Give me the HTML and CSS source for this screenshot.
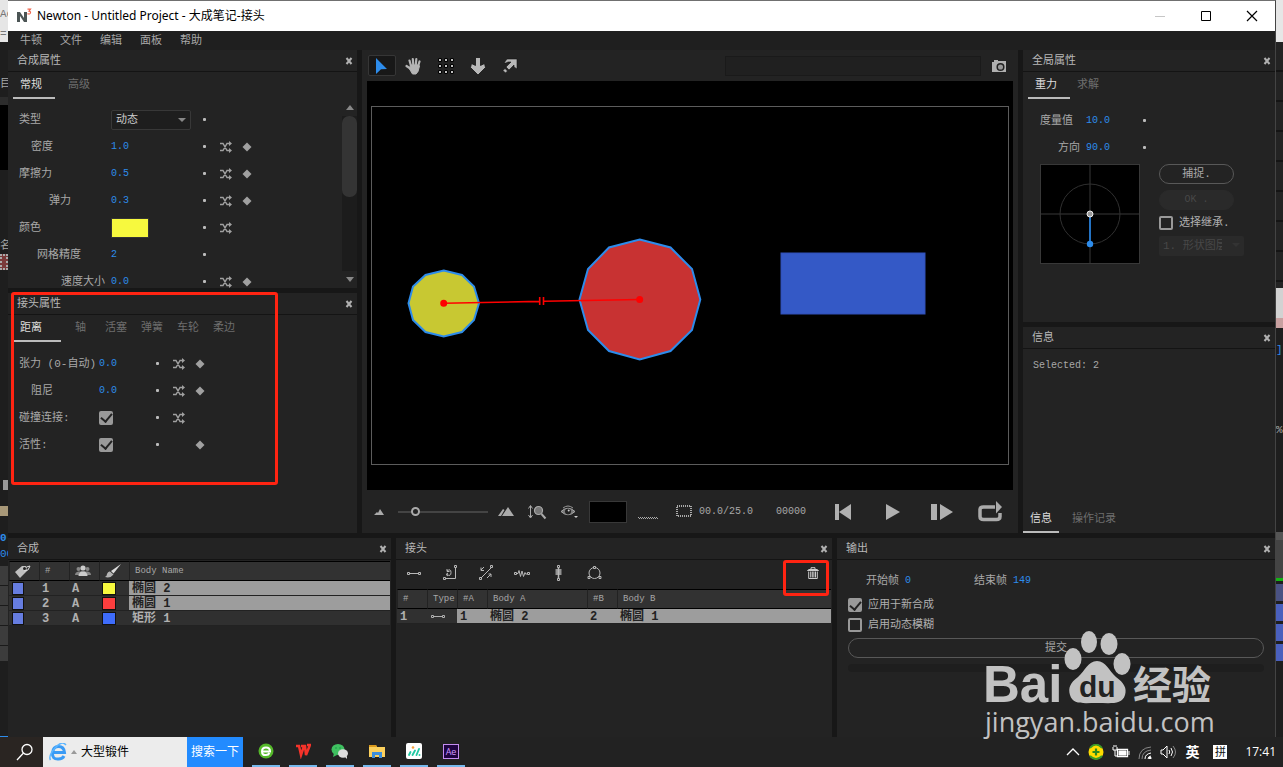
FILE: index.html
```
<!doctype html>
<html lang="zh-CN">
<head>
    <meta charset="utf-8">
    <meta name="viewport" content="width=device-width, initial-scale=1.0">
    <title>Newton - Untitled Project</title>
    <link rel="stylesheet" href="styles.css">
</head>
<body>

<!-- 公用图标 -->
<svg class="sprite" aria-hidden="true">
    <symbol id="i-shuffle" viewBox="0 0 12 12">
        <path d="M0 2.500h3L7 9.500h3M0 9.500h3L7 2.500h3" fill="none" stroke="currentColor" stroke-width="1.400"/>
        <path d="M9 0l3 2.500L9 5zM9 7l3 2.500L9 12z" fill="currentColor"/>
    </symbol>
    <symbol id="i-key" viewBox="0 0 10 10"><path d="M5 .5L9.500 5 5 9.500.5 5z" fill="currentColor"/></symbol>
    <symbol id="i-close" viewBox="0 0 8 8"><path d="M1.500 1l5 6M6.500 1l-5 6" stroke="currentColor" stroke-width="2"/></symbol>
    <symbol id="i-link" viewBox="0 0 16 16">
        <path d="M4 8.500h8" stroke="currentColor"/>
        <path d="M1.500 7.500h2v2h-2zM12.500 7.500h2v2h-2z" fill="#232323" stroke="currentColor"/>
    </symbol>
</svg>

<div class="screen">
    <div class="desktop">
        <div class="behind left">
            <div class="seg light"><span>Ac</span><span>=(</span></div>
            <div class="seg tabs-peek"><span>目</span></div>
            <div class="seg black"></div>
            <div class="seg names"><span>名</span><i class="film"></i></div>
            <div class="seg rest"><i class="trash-peek"></i></div>
            <div class="seg sand"></div>
            <div class="seg time-peek"><b>0:</b><span>00</span></div>
            <div class="seg rows-peek"></div>
            <div class="seg foot"></div>
        </div>

        <div class="window">
            <header class="titlebar">
                <svg class="logo" width="17" height="16" viewBox="0 0 17 16">
                    <path d="M1 14V4h3l4 6V4h3v10H8L4 8v6z" fill="#4c5555"/>
                    <path d="M11.500 1.200h3L13 3.200q2.500.5 1 2.400-1 .8-2.500 0" fill="none" stroke="#f0664e" stroke-width="1.200"/>
                </svg>
                <h1>Newton - Untitled Project - 大成笔记-接头</h1>
                <div class="win-buttons">
                    <button aria-label="最小化"><svg width="12" height="12"><path d="M1 6.500h10" stroke="#c6c6c6"/></svg></button>
                    <button aria-label="最大化"><svg width="12" height="12"><path d="M1.500 1.500h9v9h-9z" fill="none" stroke="#000"/></svg></button>
                    <button aria-label="关闭"><svg width="12" height="12"><path d="M1 1l10 10M11 1L1 11" stroke="#000" stroke-width="1.200"/></svg></button>
                </div>
            </header>

            <nav class="menubar">
                <button>牛顿</button>
                <button>文件</button>
                <button>编辑</button>
                <button>面板</button>
                <button>帮助</button>
            </nav>

            <main class="workspace">
                <div class="top">
                    <div class="column">
                        <section class="panel">
                            <div class="panel-head"><h2>合成属性</h2><button aria-label="关闭"><svg><use href="#i-close"/></svg></button></div>
                            <div class="tabs body-tabs"><button class="on">常规</button><button>高级</button></div>
                            <div class="scroller">
                                <div class="props">
                                    <div class="prop"><label for="type">类型</label>
                                        <span class="select"><select id="type"><option>动态</option></select></span><i class="dot"></i></div>
                                    <div class="prop"><label class="in2" for="density">密度</label><input class="num" id="density" value="1.0"><i class="dot"></i>
                                        <button aria-label="随机"><svg class="shuffle"><use href="#i-shuffle"/></svg></button><button aria-label="关键帧"><svg class="key"><use href="#i-key"/></svg></button></div>
                                    <div class="prop"><label for="friction">摩擦力</label><input class="num" id="friction" value="0.5"><i class="dot"></i>
                                        <button aria-label="随机"><svg class="shuffle"><use href="#i-shuffle"/></svg></button><button aria-label="关键帧"><svg class="key"><use href="#i-key"/></svg></button></div>
                                    <div class="prop"><label class="in5" for="bounce">弹力</label><input class="num" id="bounce" value="0.3"><i class="dot"></i>
                                        <button aria-label="随机"><svg class="shuffle"><use href="#i-shuffle"/></svg></button><button aria-label="关键帧"><svg class="key"><use href="#i-key"/></svg></button></div>
                                    <div class="prop"><span>颜色</span><button class="color" aria-label="颜色"></button><i class="dot"></i>
                                        <button aria-label="随机"><svg class="shuffle"><use href="#i-shuffle"/></svg></button></div>
                                    <div class="prop"><label class="in3" for="mesh">网格精度</label><input class="num" id="mesh" value="2"><i class="dot"></i></div>
                                    <div class="prop"><label class="in7" for="speed">速度大小</label><input class="num" id="speed" value="0.0"><i class="dot"></i>
                                        <button aria-label="随机"><svg class="shuffle"><use href="#i-shuffle"/></svg></button><button aria-label="关键帧"><svg class="key"><use href="#i-key"/></svg></button></div>
                                </div>
                                <div class="scrollbar"><i class="up"></i><div class="track"><div class="thumb"></div></div><i class="down"></i></div>
                            </div>
                        </section>

                        <section class="panel joint-panel">
                            <div class="panel-head"><h2>接头属性</h2><button aria-label="关闭"><svg><use href="#i-close"/></svg></button></div>
                            <div class="tabs joint-tabs"><button class="on">距离</button><button>轴</button><button>活塞</button><button>弹簧</button><button>车轮</button><button>柔边</button></div>
                            <div class="props joint-props">
                                <div class="prop"><label for="tension">张力 (0-自动)</label><input class="num" id="tension" value="0.0"><i class="dot"></i>
                                    <button aria-label="随机"><svg class="shuffle"><use href="#i-shuffle"/></svg></button><button aria-label="关键帧"><svg class="key"><use href="#i-key"/></svg></button></div>
                                <div class="prop"><label class="in2" for="damping">阻尼</label><input class="num" id="damping" value="0.0"><i class="dot"></i>
                                    <button aria-label="随机"><svg class="shuffle"><use href="#i-shuffle"/></svg></button><button aria-label="关键帧"><svg class="key"><use href="#i-key"/></svg></button></div>
                                <div class="prop"><label for="collide">碰撞连接:</label><input type="checkbox" id="collide" checked><i class="dot"></i>
                                    <button aria-label="随机"><svg class="shuffle"><use href="#i-shuffle"/></svg></button></div>
                                <div class="prop"><label for="active">活性:</label><input type="checkbox" id="active" checked><i class="dot"></i>
                                    <i></i><button aria-label="关键帧"><svg class="key"><use href="#i-key"/></svg></button></div>
                            </div>
                            <div class="mark"></div>
                        </section>
                    </div>

                    <section class="preview">
                        <div class="toolbar">
                            <button class="on" aria-label="选择"><svg width="14" height="18" viewBox="0 0 14 18"><path d="M1 1l11 11-6 .3L1 17z" fill="#2d8ceb"/></svg></button>
                            <button aria-label="抓手"><svg width="18" height="18" viewBox="0 0 18 18" fill="none" stroke="#b4b4b4" stroke-linecap="round" stroke-width="2.200"><path d="M6 9L4.500 3.500M8.300 8L7.800 2M10.800 8l.5-6M13 9.500l1.500-5M6 12L1.500 9"/><path d="M6 8h7.500l1 1-1.500 5.500-2 2.500H7.500L4.500 12z" fill="#b4b4b4" stroke-width="1"/></svg></button>
                            <button aria-label="网格"><svg width="16" height="16" viewBox="0 0 16 16" fill="#c0c0c0" stroke="#000"><path d="M.5.5h3v3h-3zM6.500.5h3v3h-3zM12.500.5h3v3h-3zM.5 6.500h3v3h-3zM6.500 6.500h3v3h-3zM12.500 6.500h3v3h-3zM.5 12.500h3v3h-3zM6.500 12.500h3v3h-3zM12.500 12.500h3v3h-3z"/></svg></button>
                            <button aria-label="重力"><svg width="18" height="18" viewBox="0 0 18 18"><path d="M6.500.5h5v8l4-2 1 4-7.500 7.500L1.500 10.500l1-4 4 2z" fill="#b8b8b8" stroke="#111" stroke-width=".8"/></svg></button>
                            <button aria-label="速度"><svg width="16" height="16" viewBox="0 0 16 16" fill="#b8b8b8"><path d="M5 1h10v10l-3-2V7l-5 5-3-3 5-5H6L4 5H2z" stroke="#111" stroke-width=".6"/><path d="M3 10.500l2.500 2.500-2 2L1 12.500z" stroke="#111" stroke-width=".6"/></svg></button>
                            <input class="status" type="text" aria-label="状态" readonly>
                            <button class="camera" aria-label="快照"><svg width="16" height="14" viewBox="0 0 16 14"><path d="M1 3h2V1h4v1h8v11H1z" fill="#b0b0b0"/><circle cx="9.500" cy="8" r="3.300" fill="#999" stroke="#222" stroke-width="1.500"/></svg></button>
                        </div>

                        <div class="viewport">
                            <svg viewBox="0 0 646 409">
                                <rect x="4.500" y="25.500" width="637" height="358" fill="none" stroke="#5c5c5c"/>
                                <g stroke="#2d8ceb" stroke-width="2">
                                    <polygon fill="#c8c832" points="76.700,189.500 95,194 107,205.500 112,222.300 107,239 95,251 76.700,255.500 58.500,251 46,239 41.500,222.300 46,205.500 58.500,194"/>
                                    <polygon fill="#c83232" points="272.700,158.500 303.500,166.500 325,188 333.300,218.500 325,249 303.500,270 272.700,278.500 242,270 221,249 212.500,218.500 221,188 242,166.500"/>
                                </g>
                                <rect x="414" y="172" width="144" height="61" fill="#3459c6" stroke="#3050b8"/>
                                <g stroke="#f00" stroke-width="1.600" fill="#f00">
                                    <path d="M76.700 222.300L172 220.400M177 220.300L272.700 218.500M172.700 216v8M176.500 216v8"/>
                                    <circle cx="76.700" cy="222.300" r="2.700"/>
                                    <circle cx="272.700" cy="218.500" r="2.700"/>
                                </g>
                            </svg>
                        </div>

                        <div class="transport">
                            <svg width="10" height="6" viewBox="0 0 10 6"><path d="M0 6l3-3 1 1 2-4 4 6z" fill="#aaa"/></svg>
                            <input type="range" aria-label="缩放" min="0" max="100" value="16">
                            <svg width="16" height="10" viewBox="0 0 16 10"><path d="M0 9l5-7 1.500 1L3 9zM4 9l6-9 6 9z" fill="#aaa"/></svg>
                            <button aria-label="适合"><svg width="20" height="16" viewBox="0 0 20 16" fill="none" stroke="#aaa"><path d="M3.500 2v11M1.500 4.500l2-3 2 3M1.500 11l2 3 2-3"/><circle cx="11.500" cy="6.500" r="4" fill="#777" stroke-width="1.200"/><path d="M14.500 10l4 4.500" stroke-width="2"/></svg></button>
                            <button aria-label="显示"><svg width="18" height="14" viewBox="0 0 18 14"><path d="M1 6.500Q8 0 15 6.500Q8 13 1 6.500z" fill="#777" stroke="#aaa"/><path d="M3 3Q8-1 13 3" fill="none" stroke="#999"/><circle cx="8" cy="6.500" r="3" fill="#222"/><circle cx="8.700" cy="5.500" r="1" fill="#ccc"/><path d="M14 11h4l-2 2z" fill="#ccc"/></svg></button>
                            <button class="swatch" aria-label="背景颜色"></button>
                            <svg class="dash-line" width="20" height="16"><path d="M0 13.500h20M1 14.500h20" stroke="#aaa" stroke-dasharray="1 1"/></svg>
                            <svg width="16" height="14"><rect x="1" y="1" width="14" height="10" fill="none" stroke="#aaa" stroke-dasharray="1 1" stroke-width="2"/></svg>
                            <span class="clock">00.0/25.0</span>
                            <span class="clock">00000</span>
                            <button aria-label="回到开头"><svg width="16" height="16" viewBox="0 0 16 16" fill="#b0b0b0"><path d="M0 0h4v16H0zM16 0v16L4 8z"/></svg></button>
                            <button aria-label="播放"><svg width="14" height="16" viewBox="0 0 14 16" fill="#b0b0b0"><path d="M0 0l14 8-14 8z"/></svg></button>
                            <button aria-label="单步"><svg width="22" height="16" viewBox="0 0 22 16" fill="#b0b0b0"><path d="M0 0h6v16H0zM9 0l13 8-13 8z"/></svg></button>
                            <button class="loop" aria-label="循环"><svg width="24" height="22" viewBox="0 0 24 22"><path d="M17 6H5.500Q2 6 2 8.500v7Q2 18.500 5.500 18.500h13q3.500 0 3.500-3V12" fill="none" stroke="#aaa" stroke-width="3.500"/><path d="M18 0l6 6-6 6.500z" fill="#aaa"/></svg></button>
                        </div>
                    </section>

                    <div class="column side">
                        <section class="panel world">
                            <div class="panel-head"><h2>全局属性</h2><button aria-label="关闭"><svg><use href="#i-close"/></svg></button></div>
                            <div class="tabs world-tabs"><button class="on">重力</button><button>求解</button></div>
                            <div class="props world-props">
                                <div class="prop"><label for="magnitude">度量值</label><input class="num" id="magnitude" value="10.0"><i class="dot"></i></div>
                                <div class="prop"><label class="in3" for="direction">方向</label><input class="num" id="direction" value="90.0"><i class="dot"></i></div>
                            </div>
                            <div class="gravity">
                                <svg class="dial" viewBox="0 0 100 100">
                                    <rect x=".5" y=".5" width="99" height="99" stroke="#383838"/>
                                    <path d="M50 1v98M1 50h98" stroke="#1c1c1c" stroke-width="2"/>
                                    <circle cx="50" cy="50" r="30" fill="none" stroke="#303030"/>
                                    <path d="M50 50v30" stroke="#2473c4" stroke-width="2"/>
                                    <circle cx="50" cy="50" r="3" fill="#999" stroke="#eee"/>
                                    <circle cx="50" cy="80" r="3.200" fill="#2d8ceb"/>
                                </svg>
                                <div class="gravity-tools">
                                    <button class="pill">捕捉.</button>
                                    <button class="pill" disabled>OK .</button>
                                    <label class="check"><input type="checkbox">选择继承.</label>
                                    <span class="select off"><select aria-label="图层" disabled><option>1. 形状图层</option></select></span>
                                </div>
                            </div>
                        </section>

                        <section class="panel info">
                            <div class="panel-head"><h2>信息</h2><button aria-label="关闭"><svg><use href="#i-close"/></svg></button></div>
                            <p>Selected: 2</p>
                            <div class="tabs info-tabs"><button class="on">信息</button><button>操作记录</button></div>
                        </section>
                    </div>
                </div>

                <div class="bottom">
                    <section class="panel">
                        <div class="panel-head"><h2>合成</h2><button aria-label="关闭"><svg><use href="#i-close"/></svg></button></div>
                        <table class="bodies">
                            <colgroup><col class="c30"><col class="c30"><col class="c30"><col class="c30"><col></colgroup>
                            <thead>
                                <tr>
                                    <th aria-label="标签"><svg width="16" height="13" viewBox="0 0 16 13"><path d="M0 7l7-6 4 0 1 5-7 7z" fill="#c0c0c0"/><path d="M9 5q2-4 6-4l-2 4-4 1" fill="none" stroke="#ddd"/><circle cx="9.500" cy="3.500" r="1.500" fill="#222"/></svg></th>
                                    <th>#</th>
                                    <th aria-label="类型"><svg width="16" height="12" viewBox="0 0 16 12"><g fill="#888"><circle cx="3.500" cy="4" r="2"/><circle cx="12.500" cy="4" r="2"/><path d="M0 10q0-3 3.500-3.500h9Q16 7 16 10z"/></g><g fill="#ccc"><circle cx="8" cy="3" r="2.600"/><path d="M3.500 11q0-3 3-4.500h3q3 1.500 3 4.500z"/></g></svg></th>
                                    <th aria-label="颜色"><svg width="16" height="14" viewBox="0 0 16 14"><path d="M16 0L8.500 9.500 6 7z" fill="#ddd"/><path d="M5 7.500L8.500 10.500q-3 4-8.500 2.500 2-1 2-3 1-3 3-2.500z" fill="#b4b4b4"/></svg></th>
                                    <th>Body Name</th>
                                </tr>
                            </thead>
                            <tbody>
                                <tr class="sel"><td class="pic"><i class="chip"></i></td><td>1</td><td>A</td><td class="pic"><i class="chip yellow"></i></td><td>椭圆 2</td></tr>
                                <tr class="sel"><td class="pic"><i class="chip"></i></td><td>2</td><td>A</td><td class="pic"><i class="chip red"></i></td><td>椭圆 1</td></tr>
                                <tr><td class="pic"><i class="chip"></i></td><td>3</td><td>A</td><td class="pic"><i class="chip blue"></i></td><td>矩形 1</td></tr>
                            </tbody>
                        </table>
                    </section>

                    <section class="panel">
                        <div class="panel-head"><h2>接头</h2><button aria-label="关闭"><svg><use href="#i-close"/></svg></button></div>
                        <div class="joint-tools">
                            <button aria-label="距离"><svg><use href="#i-link"/></svg></button>
                            <button aria-label="轴"><svg viewBox="0 0 16 16" fill="none" stroke="currentColor"><path d="M13.500 3v10.500H4M5 6q4-3 4 1.500T5 9.500M5 4v2.500h2.500M6 11l-2-1.500L6 8"/><path d="M12.500.5h2v2h-2zM1.500 12.500h2v2h-2z"/></svg></button>
                            <button aria-label="活塞"><svg viewBox="0 0 16 16" fill="none" stroke="currentColor"><path d="M3 13L13 3M6 2L3 5M3 2.500v3h3M9 13l4-4M10.500 9H13v3"/><path d="M12.500.5h2v2h-2zM1.500 12.500h2v2h-2z"/></svg></button>
                            <button aria-label="弹簧"><svg viewBox="0 0 16 16" fill="none" stroke="currentColor"><path d="M2.500 8.500H4l1-3 1.500 6L8 6l1.500 5.500 1.500-4 .5 1.500h1.500"/><path d="M.5 7.500h2v2h-2zM13.500 7.500h2v2h-2z"/></svg></button>
                            <button aria-label="车轮"><svg viewBox="0 0 16 16" fill="none" stroke="currentColor"><path d="M8.500 2.500v11M5.500 5h6M5.500 7h6M5.500 9h6" stroke-width="1.500"/><path d="M7.500.5h2v2h-2zM7.500 13.500h2v2h-2z"/></svg></button>
                            <button aria-label="柔边"><svg viewBox="0 0 16 16" fill="#232323" stroke="currentColor"><circle cx="8.500" cy="8" r="5.500"/><path d="M7.500 1.500h2v2h-2zM2 11.500h2v2H2zM13 11.500h2v2h-2z"/></svg></button>
                            <button class="bin" aria-label="删除"><svg width="12" height="12" viewBox="0 0 12 12" fill="none" stroke="#ccc"><path d="M.5 3.500L2 2.500h8l1.500 1zM4 2V.7h4V2M1.700 4.500v7h8.600v-7M3.700 4.500v6M5.300 4.500v6M6.900 4.500v6M8.500 4.500v6"/></svg></button>
                            <div class="mark"></div>
                        </div>
                        <table class="joints">
                            <colgroup><col class="c30"><col class="c30"><col class="c30"><col class="c100"><col class="c30"><col></colgroup>
                            <thead><tr><th>#</th><th>Type</th><th>#A</th><th>Body A</th><th>#B</th><th>Body B</th></tr></thead>
                            <tbody><tr class="sel"><td>1</td><td class="pic"><svg width="16" height="14" viewBox="0 1 16 14"><use href="#i-link" width="16" height="16"/></svg></td><td>1</td><td>椭圆 2</td><td>2</td><td>椭圆 1</td></tr></tbody>
                        </table>
                    </section>

                    <section class="panel">
                        <div class="panel-head"><h2>输出</h2><button aria-label="关闭"><svg><use href="#i-close"/></svg></button></div>
                        <form class="output">
                            <div class="frames">
                                <label for="start">开始帧</label><input class="num" id="start" value="0">
                                <label for="end">结束帧</label><input class="num" id="end" value="149">
                            </div>
                            <label class="check"><input type="checkbox" checked>应用于新合成</label>
                            <label class="check"><input type="checkbox">启用动态模糊</label>
                            <button class="pill" type="button">提交</button>
                            <div class="progress"></div>
                        </form>
                    </section>
                </div>
            </main>
        </div>

        <div class="behind right">
            <div class="seg light"></div>
            <div class="seg lines"></div>
            <div class="seg patch"></div>
            <div class="seg mid"><span>]</span></div>
            <div class="seg percent"><span>%</span></div>
            <div class="seg grey"></div>
            <div class="seg green"></div>
            <div class="seg bar dim"></div>
            <div class="seg bar"></div>
            <div class="seg bar"></div>
            <div class="seg bar"></div>
        </div>
    </div>

    <footer class="taskbar">
        <button class="find" aria-label="搜索"><svg width="18" height="18" viewBox="0 0 18 18" fill="none" stroke="#fff" stroke-width="1.300"><circle cx="11" cy="6.500" r="5"/><path d="M7.500 10L1 17"/></svg></button>
        <div class="search">
            <svg width="18" height="18" viewBox="0 0 18 18" fill="none"><path d="M4 9.500h11.500Q15 3.500 9.500 3.500T3.500 10t6 6q4 0 5.500-3" stroke="#3a9bf5" stroke-width="3"/><path d="M1.500 17Q-1 13 6 5T17 2" stroke="#5bb5ff" stroke-width="1.500"/></svg>
            <i class="caret"></i>
            <input type="text" aria-label="搜索内容" value="大型锻件">
        </div>
        <button class="go">搜索一下</button>
        <div class="apps">
            <button aria-label="浏览器"><svg width="16" height="16" viewBox="0 0 16 16"><circle cx="8" cy="8" r="7.500" fill="#55b82a"/><path d="M4 8.500h8Q12 4.500 8 4.500T4 8.500t4 3.500q2.500 0 3.500-2" fill="none" stroke="#fff" stroke-width="2"/></svg></button>
            <button aria-label="文档"><svg width="16" height="16" viewBox="0 0 16 16" fill="none" stroke="#f5332a" stroke-width="2.500"><path d="M1 3h3l2 9 3-9M6 3h4l1 9 4-10h-3"/></svg></button>
            <button aria-label="聊天"><svg width="18" height="16" viewBox="0 0 18 16"><ellipse cx="7" cy="6.500" rx="6.500" ry="5.500" fill="#3fc060"/><path d="M3 10l-1 4 4-2" fill="#3fc060"/><ellipse cx="12" cy="10.500" rx="5" ry="4.200" fill="#ddd"/><path d="M14 14l2 2v-3" fill="#ddd"/><g fill="#194"><circle cx="5" cy="5" r=".8"/><circle cx="9" cy="5" r=".8"/></g></svg></button>
            <button aria-label="文件夹"><svg width="16" height="14" viewBox="0 0 16 14"><path d="M0 1h7l1 2h8v10H0z" fill="#fbd05d"/><path d="M0 1h7l1 2H0z" fill="#d9991c"/><path d="M3 14V8h10v6h-3v-3H6v3z" fill="#3c8edb"/></svg></button>
            <button aria-label="数据"><svg width="16" height="16" viewBox="0 0 16 16"><rect width="16" height="16" rx="2" fill="#fff"/><path d="M3 12l1.500-3M6.500 12L9 7.500M10.500 12L13 6M13.500 12v.1" stroke="#22c9a4" stroke-width="1.900" stroke-linecap="round"/><circle cx="7" cy="4.500" r="1.300" fill="#f5a13a"/></svg></button>
            <button aria-label="After Effects"><span class="ae">Ae</span></button>
        </div>
        <div class="tray">
            <svg width="14" height="8" viewBox="0 0 14 8"><path d="M1 7l6-6 6 6" fill="none" stroke="#fff" stroke-width="1.300"/></svg>
            <svg width="16" height="16" viewBox="0 0 16 16"><circle cx="8" cy="8" r="7.500" fill="#ffdc00"/><path d="M2 4Q8-3 14 4M2 12q6 6 12 0" fill="none" stroke="#3a9a28" stroke-width="1.800"/><path d="M8 4.500v7M4.500 8h7" stroke="#2c8a20" stroke-width="2.200"/></svg>
            <svg width="18" height="14" viewBox="0 0 18 14" fill="none" stroke="#fff"><path d="M5.500 4.500h10v7h-10z" stroke-width="1.300"/><path d="M7 6h7v4H7z" fill="#fff"/><path d="M17 6v4M1 2v3h4V2M3 5v6h2M2 0v2M4 0v2"/></svg>
            <svg width="14" height="14" viewBox="0 0 14 14" fill="none"><path d="M1 14Q1 3 13 2M4 14Q4 6 13 5" stroke="#888"/><path d="M7 14q0-5 6-6M10 14q0-2.500 3-3" stroke="#fff"/><circle cx="12" cy="13" r="1.500" fill="#fff"/></svg>
            <svg width="17" height="14" viewBox="0 0 17 14" fill="none" stroke="#fff"><path d="M1 5h2l4-4v12L3 9H1z"/><path d="M9 5q1.500 2 0 4M11 3q3 4 0 8"/><path d="M13 1q5 6 0 12" stroke="#888"/></svg>
            <b class="lang">英</b>
            <span class="ime">拼</span>
            <time>17:41</time>
        </div>
    </footer>

    <svg class="watermark" viewBox="0 0 232 114" width="232" height="114" fill="#c2c2c2">
        <text class="wm-bai" x="-2" y="71">Bai</text>
        <ellipse cx="88" cy="28" rx="8.500" ry="11"/>
        <ellipse cx="104" cy="11" rx="8" ry="11"/>
        <ellipse cx="124" cy="13" rx="8.500" ry="11"/>
        <ellipse cx="137" cy="33" rx="8.500" ry="11"/>
        <path d="M112 30c-9 0-12 10-19 16-8 6-10 11-8 18 3 10 13 8 27 8s25 2 28-8c2-7-1-12-9-18-7-6-10-16-19-16z"/>
        <text class="wm-du" x="94" y="66">du</text>
        <text class="wm-cn" x="148" y="68">经验</text>
        <text class="wm-url" x="0" y="101">jingyan.baidu.com</text>
    </svg>
</div>

</body>
</html>
```
FILE: styles.css
```
* {
    box-sizing: border-box;
}

body {
    margin: 0;
    background: #171717;
    color: #a8a8a8;
    font-family: "Liberation Mono", "Noto Sans CJK SC", monospace;
    font-size: 11px;
    line-height: 16px;
}

h1, h2, p {
    margin: 0;
    font-size: 11px;
    font-weight: normal;
}

button, input, select {
    margin: 0;
    padding: 0;
    border: 0;
    background: none;
    color: inherit;
    font: inherit;
}

button {
    display: flex;
    align-items: center;
    justify-content: center;
    flex-shrink: 0;
}

svg {
    display: block;
    flex-shrink: 0;
}

i {
    font-style: normal;
}

.sprite {
    position: absolute;
    width: 0;
    height: 0;
}

.screen {
    position: relative;
    display: flex;
    flex-direction: column;
    height: 100vh;
    overflow: hidden;
}

.desktop {
    display: flex;
    flex: 1;
    min-height: 0;
}

/* 后面窗口露出来的边 */
.behind {
    display: flex;
    flex-direction: column;
    flex-shrink: 0;
    overflow: hidden;
    background: #1e1e1e;
}

.behind.left {
    width: 8px;
}

.behind.right {
    width: 7px;
}

.seg {
    flex-shrink: 0;
    overflow: hidden;
    white-space: nowrap;
}

.seg span {
    display: block;
}

.seg.light {
    height: 42px;
    padding-top: 4px;
    background: #e6e6e6;
    color: #777;
    line-height: 20px;
}

.tabs-peek {
    height: 63px;
    padding-top: 34px;
    border-bottom: 8px solid #2c2c2c;
}

.seg.black {
    height: 65px;
    background: #000;
}

.names {
    height: 106px;
    padding-top: 68px;
}

.film {
    display: block;
    height: 16px;
    border: 2px dotted #aaa;
    background: #7a3a3a;
}

.rest {
    height: 230px;
    padding: 204px 0 0 3px;
}

.trash-peek {
    display: block;
    height: 10px;
    background: #999;
}

.sand {
    height: 10px;
    background: #a89878;
}

.time-peek {
    height: 50px;
    padding-top: 14px;
    color: #2d8ceb;
}

.rows-peek {
    height: 95px;
    background: repeating-linear-gradient(#3c3c3c 0 19px, #1a1a1a 19px 20px);
}

.foot {
    flex: 1;
    border-bottom: 1px solid #2d8ceb;
}

.lines {
    height: 246px;
    background: repeating-linear-gradient(#232323 0 28px, #141414 28px 30px);
}

.patch {
    height: 40px;
    border-bottom: 10px solid #c8a0a0;
    background: #d2d2d2;
}

.mid {
    height: 94px;
    padding-top: 14px;
    color: #2d8ceb;
}

.percent {
    height: 110px;
    color: #aaa;
}

.grey {
    height: 46px;
    border-top: 8px solid #555;
    background: #444;
}

.green {
    height: 3px;
    background: #14b414;
}

.bar {
    height: 17px;
    margin-top: 3px;
    background: #4a60bd;
}

.bar.dim {
    background: #4a5283;
}

/* 主窗口 */
.window {
    display: flex;
    flex: 1;
    flex-direction: column;
    min-width: 0;
    border-top: 1px solid #707070;
    border-right: 1px solid #444;
}

.titlebar {
    display: flex;
    align-items: center;
    height: 30px;
    padding-left: 8px;
    background: #fff;
    color: #000;
}

.titlebar h1 {
    flex: 1;
    margin-left: 4px;
    font-family: "Noto Sans", "Noto Sans CJK SC", sans-serif;
    font-size: 12px;
}

.win-buttons {
    display: flex;
}

.win-buttons button {
    width: 46px;
    height: 30px;
}

.menubar {
    display: flex;
    gap: 18px;
    height: 19px;
    padding-left: 12px;
    background: #1f1f1f;
}

.workspace {
    display: flex;
    flex: 1;
    flex-direction: column;
    gap: 5px;
    min-height: 0;
}

.top {
    display: grid;
    flex: 1;
    grid-template-columns: 349px 1fr 252px;
    gap: 5px;
    min-height: 0;
}

.bottom {
    display: grid;
    grid-template-columns: 383fr 436fr 438fr;
    gap: 5px;
    height: 199px;
}

.column {
    display: grid;
    grid-template-rows: 238fr 240fr;
    gap: 5px;
    min-height: 0;
}

.column.side {
    grid-template-rows: 272fr 206fr;
}

.panel {
    display: flex;
    flex-direction: column;
    min-width: 0;
    min-height: 0;
    background: #232323;
}

.panel-head {
    display: flex;
    flex-shrink: 0;
    justify-content: space-between;
    height: 22px;
    padding: 0 4px 0 9px;
    border-bottom: 1px solid #141414;
    color: #b8b8b8;
}

.panel-head h2 {
    padding-top: 3px;
}

.panel-head svg {
    width: 8px;
    height: 8px;
    color: #b0b0b0;
}

.tabs {
    display: flex;
    flex-shrink: 0;
    height: 27px;
    color: #6e6e6e;
}

.tabs button {
    border-bottom: 2px solid transparent;
}

.tabs .on {
    border-bottom-color: #bbb;
    color: #ddd;
}

.body-tabs {
    gap: 13px;
    padding-left: 5px;
}

.body-tabs .on,
.world-tabs .on {
    width: 42px;
    padding-right: 6px;
}

.joint-tabs {
    gap: 14px;
    padding-left: 6px;
}

.joint-tabs .on {
    width: 47px;
    padding-right: 13px;
}

.joint-tabs .on + button {
    justify-content: flex-start;
    width: 16px;
}

.world-tabs {
    gap: 7px;
    padding-left: 5px;
}

/* 属性行 */
.props {
    display: flex;
    flex: 1;
    flex-direction: column;
    overflow: hidden;
    padding: 7px 0 0 11px;
}

.prop {
    display: grid;
    flex-shrink: 0;
    grid-template-columns: 92px 92px 17px 22px 20px;
    align-items: center;
    height: 27px;
}

.prop label {
    white-space: nowrap;
}

.in2 {
    padding-left: 12px;
}

.in3 {
    padding-left: 18px;
}

.in5 {
    padding-left: 30px;
}

.in7 {
    padding-left: 42px;
}

.joint-props {
    padding-top: 8px;
}

.joint-props .prop {
    grid-template-columns: 80px 57px 17px 22px 20px;
}

.num {
    width: 40px;
    color: #2d8ceb;
    font-size: 10px;
}

.dot {
    width: 3px;
    height: 3px;
    border-radius: 1px;
    background: #bbb;
}

.prop button {
    justify-content: flex-start;
    color: #a0a0a0;
}

.shuffle {
    width: 12px;
    height: 12px;
}

.key {
    width: 10px;
    height: 10px;
}

.prop .color {
    width: 38px;
    height: 20px;
    border: 1px solid #333;
    background: #f7f93e;
}

.select {
    position: relative;
    display: block;
    width: 80px;
    height: 20px;
    border: 1px solid #383838;
    border-radius: 2px;
    background: #1e1e1e;
    color: #ccc;
}

.select select {
    width: 100%;
    height: 18px;
    padding-left: 4px;
    appearance: none;
}

.select::after {
    position: absolute;
    top: 7px;
    right: 4px;
    border: 4px solid transparent;
    border-top-color: #888;
    border-bottom: 0;
    content: "";
}

.select.off {
    width: 85px;
    border: 0;
    background: #2a2a2a;
    color: #484848;
}

.select.off select {
    height: 20px;
    padding-right: 22px;
    color: inherit;
    opacity: 1;
}

.select.off::after {
    border-top-color: #333;
}

input[type=checkbox] {
    display: grid;
    width: 14px;
    height: 14px;
    border: 2px solid #999;
    border-radius: 2px;
    appearance: none;
    place-content: center;
}

input[type=checkbox]:checked {
    background: #999;
}

input[type=checkbox]:checked::after {
    width: 5px;
    height: 9px;
    margin-bottom: 2px;
    border: solid #222;
    border-width: 0 2px 2px 0;
    transform: rotate(40deg);
    content: "";
}

.check {
    display: flex;
    align-items: center;
    gap: 6px;
    height: 20px;
    color: #b0b0b0;
    white-space: nowrap;
}

.scroller {
    display: flex;
    flex: 1;
    min-height: 0;
}

.scrollbar {
    display: flex;
    flex-direction: column;
    align-items: center;
    width: 15px;
    padding: 6px 0;
}

.scrollbar .up,
.scrollbar .down {
    border: 4px solid transparent;
}

.scrollbar .up {
    border-top: 0;
    border-bottom: 5px solid #888;
}

.scrollbar .down {
    border-top: 5px solid #888;
    border-bottom: 0;
}

.track {
    flex: 1;
    width: 15px;
    margin: 6px 0;
    background: #1c1c1c;
}

.thumb {
    height: 52%;
    border-radius: 7px;
    background: #343434;
}

/* 红色标注框 */
.mark {
    position: absolute;
    border: 3px solid #ff2412;
    border-radius: 3px;
    pointer-events: none;
}

.joint-panel {
    position: relative;
}

.joint-panel .mark {
    top: -1px;
    left: 3px;
    width: 267px;
    height: 193px;
}

/* 预览 */
.preview {
    display: flex;
    flex-direction: column;
    min-width: 0;
    padding: 0 5px;
    background: #232323;
}

.toolbar {
    display: flex;
    align-items: center;
    gap: 4px;
    height: 31px;
    padding-left: 1px;
}

.toolbar button {
    width: 28px;
    height: 21px;
}

.toolbar .on {
    border: 1px solid #363636;
    border-radius: 2px;
    background: #181818;
}

.status {
    width: 256px;
    height: 20px;
    margin-left: auto;
    border: 1px solid #1a1a1a;
    background: #202020;
}

.viewport {
    flex: 1;
    min-height: 0;
    background: #000;
}

.viewport svg {
    width: 100%;
    height: 100%;
}

.transport {
    display: grid;
    grid-template-columns: 24px 104px 22px 40px 24px 54px 34px 30px 77px 51px 32px 68px 30px 1fr;
    align-items: center;
    justify-items: center;
    height: 43px;
    padding-top: 1px;
}

.transport .dash-line {
    justify-self: start;
    margin-left: 3px;
}

.transport .clock {
    justify-self: start;
    font-size: 10px;
}

.transport .loop {
    justify-self: end;
    margin-right: 11px;
}

.swatch {
    width: 38px;
    height: 22px;
    border: 1px solid #383838;
    background: #000;
}

input[type=range] {
    width: 90px;
    height: 10px;
    appearance: none;
}

input[type=range]::-webkit-slider-runnable-track {
    height: 2px;
    background: #444;
}

input[type=range]::-webkit-slider-thumb {
    width: 9px;
    height: 9px;
    margin-top: -4px;
    border: 2px solid #aaa;
    border-radius: 50%;
    background: #232323;
    appearance: none;
}

/* 右侧 */
.world-props {
    flex: none;
    padding: 8px 0 0 17px;
}

.world-props .prop {
    grid-template-columns: 46px 57px 18px;
}

.gravity {
    display: flex;
    gap: 19px;
    padding: 3px 0 0 17px;
}

.dial {
    width: 100px;
    height: 100px;
}

.gravity-tools {
    display: flex;
    flex-direction: column;
    gap: 6px;
    width: 85px;
}

.gravity-tools .check {
    height: 14px;
}

.pill {
    height: 20px;
    border: 1px solid #585858;
    border-radius: 10px;
}

.pill:disabled {
    border-color: #2a2a2a;
    background: #2a2a2a;
    color: #484848;
    font-size: 10px;
}

.gravity-tools .pill {
    width: 75px;
}

.info p {
    flex: 1;
    padding: 9px 10px;
    font-size: 10px;
}

.info-tabs {
    gap: 13px;
}

.info-tabs .on {
    width: 36px;
}

/* 下方表格 */
table {
    width: calc(100% - 2px);
    margin: 0 1px;
    border-collapse: separate;
    border-spacing: 0;
    table-layout: fixed;
}

.bodies {
    margin-top: 1px;
}

.c30 {
    width: 30px;
}

.c100 {
    width: 100px;
}

th {
    height: 20px;
    padding: 0 5px;
    border: solid #000;
    border-width: 1px 0;
    border-left: 1px solid #222;
    background: #323232;
    font-size: 9px;
    font-weight: normal;
    line-height: 18px;
    text-align: left;
    white-space: nowrap;
}

td {
    height: 15px;
    padding: 2px 3px 0;
    border-bottom: 1px solid #222;
    background: #303030;
    color: #b0b0b0;
    font-size: 12px;
    font-weight: bold;
    line-height: 12px;
    white-space: nowrap;
}

td.pic {
    padding-top: 0;
}

.bodies .sel td:last-child,
.joints .sel td:nth-child(n+3) {
    background: #9d9d9d;
    color: #222;
}

.chip {
    display: block;
    width: 12px;
    height: 13px;
    border: 1px solid #111;
    background: #667de0;
}

.chip.yellow,
.chip.red,
.chip.blue {
    width: 14px;
}

.chip.yellow {
    background: #f7f93e;
}

.chip.red {
    background: #fb3e3e;
}

.chip.blue {
    background: #3e6cfb;
}

.joint-tools {
    position: relative;
    display: flex;
    gap: 20px;
    height: 29px;
    padding: 0 13px 3px 10px;
}

.joint-tools svg {
    width: 16px;
    height: 16px;
    color: #b8b8b8;
}

.joint-tools .bin {
    margin-left: auto;
}

.joint-tools .bin svg {
    width: 12px;
    height: 12px;
}

.joint-tools .mark {
    top: 0;
    right: 3px;
    width: 46px;
    height: 36px;
}

/* 输出 */
.output {
    display: flex;
    flex-direction: column;
    padding: 13px 11px;
}

.frames {
    display: flex;
    height: 22px;
    padding: 0 18px;
}

.frames .num {
    width: 69px;
    height: 16px;
}

.frames label {
    margin-right: 6px;
}

.progress {
    height: 8px;
    margin-top: 6px;
    border-radius: 4px;
    background: #1e1e1e;
}

.output .pill {
    margin-top: 3px;
}

/* 任务栏 */
.taskbar {
    display: flex;
    flex-shrink: 0;
    height: 30px;
    background: #222;
    color: #fff;
    font-family: "Open Sans", "Noto Sans CJK SC", sans-serif;
    font-size: 12px;
}

.find {
    width: 43px;
    padding-left: 7px;
    background: #2a2522;
}

.search {
    display: flex;
    align-items: center;
    gap: 4px;
    width: 144px;
    padding-left: 6px;
    background: #ececec;
    color: #000;
}

.search input {
    flex: 1;
    min-width: 0;
}

.caret {
    border: 3px solid transparent;
    border-top: 0;
    border-bottom: 4px solid #999;
}

.go {
    width: 56px;
    background: #228bff;
}

.apps {
    display: flex;
    flex: 1;
    gap: 9px;
    padding-left: 9px;
}

.apps button {
    width: 28px;
    border-bottom: 2px solid #76b9ed;
}

.ae {
    width: 16px;
    height: 15px;
    border: 1px solid #c48cf0;
    background: #1f0440;
    color: #d09cff;
    font-size: 9px;
    line-height: 13px;
}

.tray {
    display: flex;
    align-items: center;
    gap: 8px;
    padding-right: 7px;
}

.lang {
    font-size: 14px;
}

.ime {
    width: 14px;
    height: 14px;
    margin: 0 10px 0 6px;
    background: #fff;
    color: #111;
    font-size: 11px;
    line-height: 13px;
    text-align: center;
}

.watermark {
    position: absolute;
    right: 66px;
    bottom: 22px;
    overflow: visible;
}

.wm-bai {
    font-family: "Liberation Sans", sans-serif;
    font-size: 51px;
    font-weight: bold;
}

.wm-du {
    fill: #232323;
    font-family: "Liberation Sans", sans-serif;
    font-size: 30px;
    font-weight: bold;
}

.wm-cn {
    font-family: "Noto Sans CJK SC", sans-serif;
    font-size: 39px;
    font-weight: bold;
}

.wm-url {
    font-family: "Open Sans", sans-serif;
    font-size: 27px;
}
```
